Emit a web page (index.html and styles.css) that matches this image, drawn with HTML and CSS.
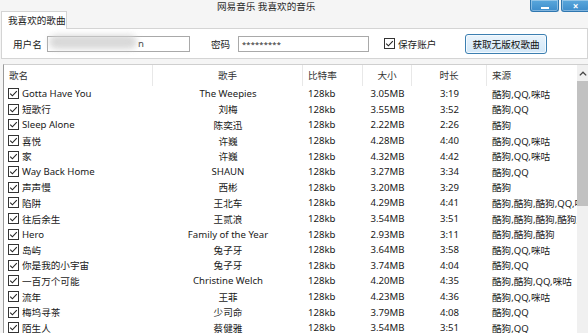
FILE: index.html
```html
<!DOCTYPE html>
<html lang="zh-CN">
<head>
<meta charset="utf-8">
<title>网易音乐 我喜欢的音乐</title>
<link rel="stylesheet" href="styles.css">
</head>
<body>
<div class="win">
  <div class="titlebar">
    <span class="title">网易音乐 我喜欢的音乐</span>
    <div class="ctrls">
      <span class="wbtn min"><span class="dash"></span></span>
      <span class="wbtn close">×</span>
    </div>
  </div>
  <div class="tabs"><span class="tab">我喜欢的歌曲</span></div>
  <div class="panel">
    <span class="lbl l-user">用户名</span>
    <div class="field f-user"><span class="blur"></span><span class="tail">n</span></div>
    <span class="lbl l-pass">密码</span>
    <div class="field f-pass">*********</div>
    <span class="cb cb-save"><svg viewBox="0 0 11 11" width="11" height="11"><rect x="0.5" y="0.5" width="10" height="10" fill="#fff" stroke="#333"/><path d="M2.2 5.6 L4.4 7.8 L8.8 3.2" fill="none" stroke="#222" stroke-width="1.1"/></svg></span>
    <span class="lbl l-save">保存账户</span>
    <span class="fetch">获取无版权歌曲</span>
  </div>
  <div class="list">
    <div class="grid">
      <div class="row head">
        <span class="c1">歌名</span><span class="c2">歌手</span><span class="c3">比特率</span><span class="c4">大小</span><span class="c5">时长</span><span class="c6">来源</span>
      </div>
      <div id="rows"></div>
    </div>
    <div class="scrollbar">
      <div class="sb-up"><svg viewBox="0 0 8 5" width="8" height="5"><path d="M0.8 4.4 L4 1.2 L7.2 4.4" fill="none" stroke="#444" stroke-width="1.3"/></svg></div>
      <div class="sb-thumb"></div>
    </div>
  </div>
</div>
<script src="app.js"></script>
</body>
</html>
```
FILE: app.js
```js
var data = [
  ["Gotta Have You","The Weepies","128kb","3.05MB","3:19","酷狗,QQ,咪咕"],
  ["短歌行","刘梅","128kb","3.55MB","3:52","酷狗,QQ"],
  ["Sleep Alone","陈奕迅","128kb","2.22MB","2:26","酷狗"],
  ["喜悦","许巍","128kb","4.28MB","4:40","酷狗,QQ,咪咕"],
  ["家","许巍","128kb","4.32MB","4:42","酷狗,QQ,咪咕"],
  ["Way Back Home","SHAUN","128kb","3.27MB","3:34","酷狗,QQ"],
  ["声声慢","西彬","128kb","3.20MB","3:29","酷狗"],
  ["陷阱","王北车","128kb","4.29MB","4:41","酷狗,酷狗,酷狗,QQ,咪咕"],
  ["往后余生","王贰浪","128kb","3.54MB","3:51","酷狗,酷狗,酷狗,酷狗,咪咕"],
  ["Hero","Family of the Year","128kb","2.93MB","3:11","酷狗,酷狗,酷狗"],
  ["岛屿","兔子牙","128kb","3.64MB","3:58","酷狗,QQ,咪咕"],
  ["你是我的小宇宙","兔子牙","128kb","3.74MB","4:04","酷狗,QQ"],
  ["一百万个可能","Christine Welch","128kb","4.20MB","4:35","酷狗,酷狗,QQ,咪咕"],
  ["流年","王菲","128kb","4.23MB","4:36","酷狗,QQ,咪咕"],
  ["梅坞寻茶","少司命","128kb","3.79MB","4:08","酷狗,QQ"],
  ["陌生人","蔡健雅","128kb","3.54MB","3:51","酷狗,QQ"]
];
var box = '<svg viewBox="0 0 11 11" width="11" height="11"><rect x="0.5" y="0.5" width="10" height="10" fill="#fff" stroke="#333"/><path d="M2.2 5.6 L4.4 7.8 L8.8 3.2" fill="none" stroke="#222" stroke-width="1.1"/></svg>';
var html = "";
data.forEach(function (d) {
  html += '<div class="row">' +
    '<span class="c1"><span class="cb">' + box + '</span><span class="name">' + d[0] + '</span></span>' +
    '<span class="c2">' + d[1] + '</span>' +
    '<span class="c3">' + d[2] + '</span>' +
    '<span class="c4">' + d[3] + '</span>' +
    '<span class="c5">' + d[4] + '</span>' +
    '<span class="c6">' + d[5] + '</span>' +
    '</div>';
});
document.getElementById("rows").innerHTML = html;
```
FILE: styles.css
```css
html, body {
  margin: 0;
  padding: 0;
}
body {
  width: 588px;
  height: 333px;
  overflow: hidden;
  background: #f5f5f5;
  font-family: "Noto Sans", "Noto Sans CJK SC", sans-serif;
  font-size: 9.6px;
  color: #1a1a1a;
}
.win {
  display: flex;
  flex-direction: column;
  height: 333px;
}
.titlebar {
  height: 12px;
  display: flex;
  align-items: flex-start;
}
.title {
  margin-left: 217px;
  line-height: 14px;
  color: #2a2a2a;
}
.ctrls {
  margin-left: auto;
  display: flex;
  gap: 2px;
  margin-right: -2px;
}
.wbtn {
  width: 27px;
  height: 11px;
  background: linear-gradient(#5aa8dc, #3d8ccb);
  border: 1px solid #2f77b0;
  border-top: none;
  border-radius: 0 0 3px 3px;
  box-shadow: inset 0 0 0 1px rgba(255,255,255,0.35);
  display: flex;
  align-items: center;
  justify-content: center;
  color: #fff;
  font-weight: bold;
  font-size: 10px;
  line-height: 10px;
}
.dash {
  width: 8px;
  height: 2px;
  background: #fff;
  margin-top: 4px;
}
.tabs {
  display: flex;
  height: 17px;
  margin-top: -1px;
  padding-left: 1px;
}
.tab {
  width: 66px;
  height: 18px;
  box-sizing: border-box;
  border: 1px solid #d4d4d4;
  border-bottom: none;
  background: #fff;
  padding-left: 6px;
  line-height: 18px;
  color: #222;
  position: relative;
  z-index: 1;
}
.panel {
  height: 31px;
  box-sizing: border-box;
  border: 1px solid #d4d4d4;
  margin: 0 0 0 1px;
  background: #fff;
  display: flex;
  align-items: center;
  padding-left: 11px;
}
.lbl {
  color: #222;
  white-space: nowrap;
}
.l-user { width: 34px; }
.l-pass { width: 27px; margin-left: 21px; }
.l-save { width: 67px; margin-left: 3px; }
.field {
  height: 16px;
  box-sizing: border-box;
  border: 1px solid #a9a9a9;
  background: #fff;
  display: flex;
  align-items: center;
  position: relative;
}
.f-user { width: 143px; }
.f-pass {
  width: 131px;
  padding-left: 3px;
  font-size: 7.5px;
  letter-spacing: 0.2px;
  color: #222;
}
.blur {
  position: absolute;
  left: 1px;
  top: -2px;
  width: 88px;
  height: 14px;
  border-radius: 8px;
  background: #d2d2d2;
  filter: blur(3px);
  opacity: 0.85;
}
.tail {
  margin-left: 90px;
  color: #444;
}
.cb {
  display: flex;
  width: 11px;
  height: 11px;
}
.cb-save { margin-left: 15px; }
.fetch {
  width: 82px;
  height: 20px;
  box-sizing: border-box;
  border: 1px solid #3c7fb1;
  border-radius: 3px;
  background: linear-gradient(#eaf4fc, #d3e8f8);
  box-shadow: inset 0 0 0 1px #f4faff;
  display: flex;
  align-items: center;
  justify-content: center;
  color: #111;
  margin-top: 1px;
}
.list {
  margin-top: 5px;
  margin-left: 3px;
  flex: 1;
  display: flex;
  border-top: 1px solid #cfcfcf;
  border-left: 1px solid #9a9a9a;
  background: #fff;
  overflow: hidden;
}
.grid {
  width: 573px;
  overflow: hidden;
}
.row {
  display: grid;
  grid-template-columns: 149px 150px 60px 49px 75px 90px;
  height: 15.6px;
  align-items: center;
  white-space: nowrap;
}
.row.head {
  height: 21px;
  color: #333;
}
.row.head > span {
  border-right: 1px solid #e8e8e8;
  height: 21px;
  line-height: 21px;
  box-sizing: border-box;
}
.row.head > .c6 { border-right: none; }
.row > span {
  overflow: hidden;
}
.c1 {
  display: flex;
  align-items: center;
  padding-left: 4px;
}
.row.head .c1 { padding-left: 5px; }
.c1 .cb { margin-right: 3px; }
.c2 { text-align: center; }
.c3 { padding-left: 5px; }
.c4 { text-align: center; }
.c5 { text-align: center; }
.c6 { padding-left: 5px; }
.scrollbar {
  width: 11px;
  background: #f0f0f0;
  display: flex;
  flex-direction: column;
}
.sb-up {
  height: 16px;
  display: flex;
  align-items: center;
  justify-content: center;
}
.sb-thumb {
  height: 125px;
  background: #c1c1c1;
}
```
